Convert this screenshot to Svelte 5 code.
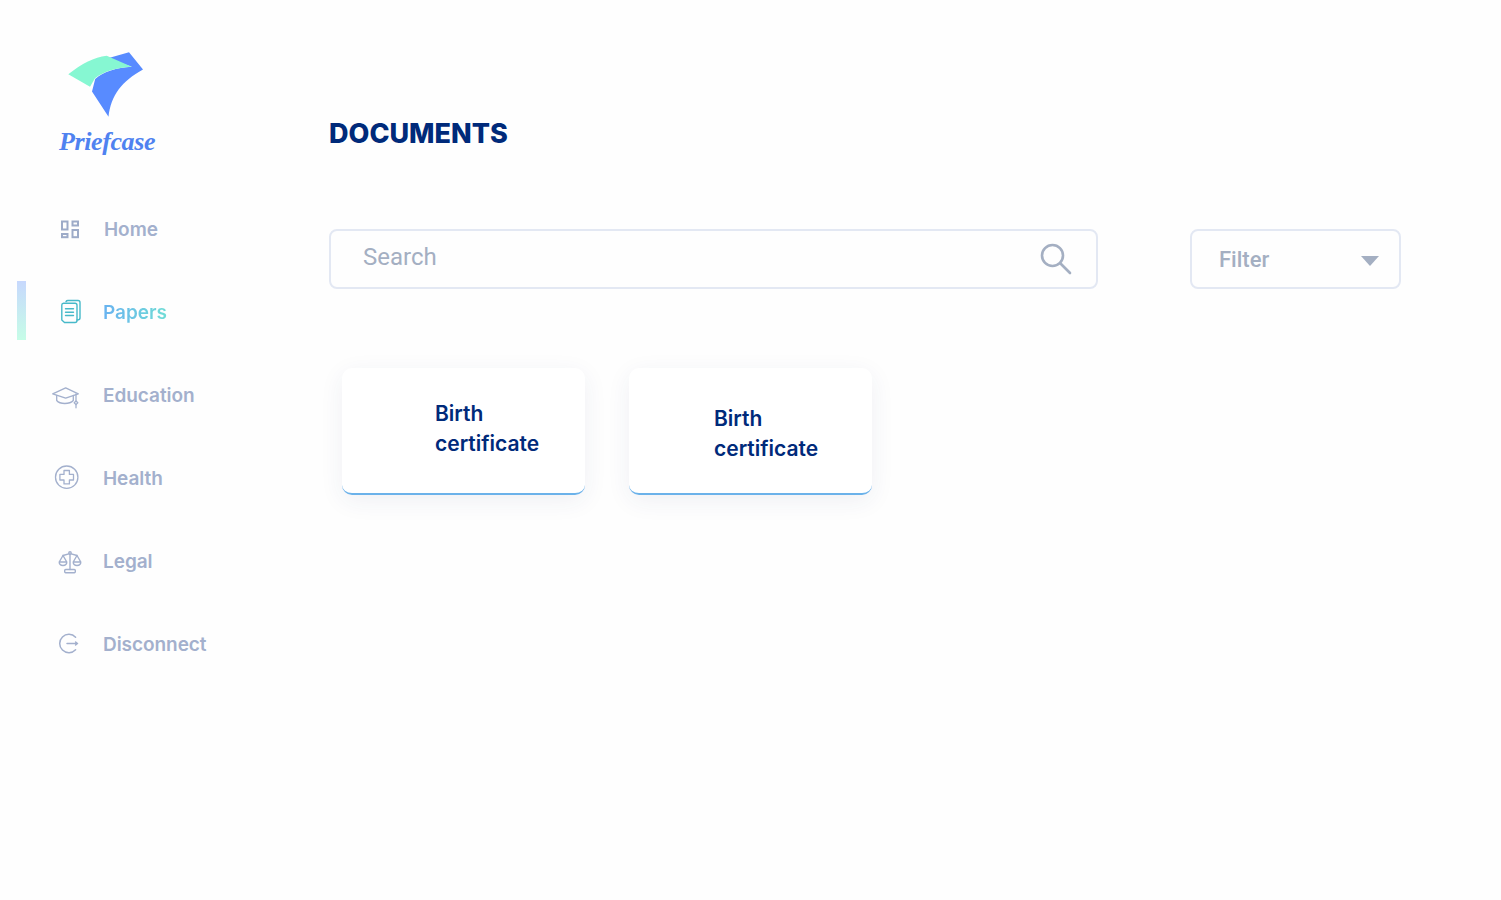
<script>
  const navItems = [
    { id: 'home', label: 'Home' },
    { id: 'papers', label: 'Papers', active: true },
    { id: 'education', label: 'Education' },
    { id: 'health', label: 'Health' },
    { id: 'legal', label: 'Legal' },
    { id: 'disconnect', label: 'Disconnect' }
  ];
</script>

<div class="page">
  <aside class="sidebar">
    <div class="brand">
      <svg class="logo" width="80" height="70" viewBox="0 0 80 70">
        <path d="M47 8.5 L69 2.3 L83 19.5 C62 31 51 45 48.5 66.8 L32 41.5 L35.2 29 C44 21 56 18 72 16.7 Z" fill="#588bff" />
        <path d="M8.3 24.3 C22 13 34 7.5 46.7 5.7 L71.7 16.7 C56 18 44 21 35 28.3 L30 36.7 Z" fill="#86f7d2" />
      </svg>
      <span class="wordmark">Priefcase</span>
    </div>

    <nav class="nav">
      {#each navItems as item}
        <a class="nav-item {item.id === 'home' ? 'home' : ''}" class:active={item.active} href="#{item.id}">
          <span class="nav-icon">
            {#if item.id === 'home'}
              <svg width="30" height="30" viewBox="0 0 30 30" fill="none" stroke="#9dabc8" stroke-width="2">
                <rect x="11" y="6.5" width="5.5" height="8" />
                <rect x="21.5" y="6.5" width="5.5" height="4" />
                <rect x="11" y="19" width="5.5" height="3.2" />
                <rect x="21.5" y="15" width="5.5" height="7.2" />
              </svg>
            {:else if item.id === 'papers'}
              <svg width="30" height="30" viewBox="0 0 30 30" fill="none" stroke="#47b9c9" stroke-width="1.4" stroke-linecap="round" stroke-linejoin="round">
                <path d="M15 3.6 C15.4 2.8 16 2.5 17 2.5 H27 C28.5 2.5 29 3.2 29 4.5 V20 C29 21.5 28.3 22 26 22" />
                <path d="M12.5 5.2 H24 C25.3 5.2 26 5.9 26 7.2 V22.5 C26 23.8 25.3 24.5 24 24.5 H13.5 L10.8 22 V7 C10.8 5.9 11.4 5.2 12.5 5.2 Z" />
                <path d="M14.5 10.8 H22.5 M14.5 14.2 H22.5 M14.5 17.5 H22.5" />
              </svg>
            {:else if item.id === 'education'}
              <svg width="30" height="30" viewBox="0 0 30 30" fill="none" stroke="#a3b0cd" stroke-width="1.3" stroke-linecap="round" stroke-linejoin="round">
                <path d="M1.7 12.8 L14.7 6.8 L27.3 12.8 L14.7 17.2 Z" />
                <path d="M5.7 14.5 V19.5 C9 23.5 18.5 23.5 22.3 19.5 V14.5" />
                <path d="M25 13 V20" />
                <path d="M25 20 L26.8 21.8 L25 23.6 L23.2 21.8 Z" />
                <path d="M25 23.6 V26.8" />
              </svg>
            {:else if item.id === 'health'}
              <svg width="30" height="30" viewBox="0 0 30 30" fill="none" stroke="#a3b0cd" stroke-width="1.3" stroke-linejoin="round">
                <circle cx="15.7" cy="13.2" r="11.2" />
                <path d="M13 6.5 H18.4 V10.4 H22.5 V16 H18.4 V19.9 H13 V16 H8.9 V10.4 H13 Z" />
              </svg>
            {:else if item.id === 'legal'}
              <svg width="30" height="30" viewBox="0 0 30 30" fill="none" stroke="#a3b0cd" stroke-width="1.4" stroke-linecap="round" stroke-linejoin="round">
                <circle cx="19" cy="6" r="1.2" />
                <path d="M19 7.4 V22.5 M12 8.5 L17.8 6.8 M20.2 6.8 L26 8.5" />
                <path d="M12 8.5 L8.2 15 M12 8.5 L15.8 15 M8.2 15 H15.8 C15.8 19.6 8.2 19.6 8.2 15 Z" />
                <path d="M26 8.5 L22.2 15 M26 8.5 L29.8 15 M22.2 15 H29.8 C29.8 19.6 22.2 19.6 22.2 15 Z" />
                <rect x="13.7" y="22.5" width="10.6" height="3.3" rx="1" />
              </svg>
            {:else}
              <svg width="30" height="30" viewBox="0 0 30 30" fill="none" stroke="#a3b0cd" stroke-width="1.5" stroke-linecap="round" stroke-linejoin="round">
                <path d="M24.6 7.2 A9.2 9.2 0 1 0 24.6 19.8" />
                <path d="M16 13.5 H26.5 M24.6 12 L26.5 13.5 L24.6 15" />
              </svg>
            {/if}
          </span>
          <span class="nav-label">{item.label}</span>
        </a>
      {/each}
    </nav>
  </aside>

  <main class="content">
    <h1>DOCUMENTS</h1>

    <div class="toolbar">
      <div class="search">
        <span>Search</span>
        <svg width="32" height="32" viewBox="0 0 32 32" fill="none" stroke="#a4afc2" stroke-width="2.6" stroke-linecap="round">
          <circle cx="12.5" cy="12.5" r="10.5" />
          <path d="M20.5 20.5 L30 30" />
        </svg>
      </div>
      <div class="filter">
        <span>Filter</span>
        <i class="caret"></i>
      </div>
    </div>

    <div class="cards">
      <div class="card first">Birth<br />certificate</div>
      <div class="card second">Birth<br />certificate</div>
    </div>
  </main>
</div>

<style>
  :global(body) {
    margin: 0;
    background: #fefefe;
  }

  .page {
    display: flex;
    height: 900px;
    font-family: Inter, "Liberation Sans", sans-serif;
  }

  .sidebar {
    width: 329px;
    flex-shrink: 0;
    box-sizing: border-box;
    padding: 50px 0 0 51px;
  }

  .brand {
    display: flex;
    flex-direction: column;
    height: 150px;
  }

  .logo {
    margin-left: 9px;
    overflow: visible;
  }

  .wordmark {
    font-family: "Liberation Serif", serif;
    font-style: italic;
    font-weight: 700;
    font-size: 26px;
    line-height: 30px;
    letter-spacing: -0.4px;
    color: #4f82f0;
    margin: 7px 0 0 8px;
  }

  .nav {
    display: flex;
    flex-direction: column;
    gap: 24px;
  }

  .nav-item {
    position: relative;
    display: flex;
    align-items: center;
    gap: 22px;
    height: 59px;
    text-decoration: none;
    color: #a3b0cd;
    font-size: 19px;
    letter-spacing: -0.05px;
    font-weight: 600;
  }

  .nav-item.home {
    gap: 23px;
  }

  .nav-icon {
    display: flex;
    width: 30px;
    height: 30px;
    flex-shrink: 0;
  }

  .nav-icon svg {
    overflow: visible;
  }

  .active .nav-label {
    background: linear-gradient(90deg, #68b2f0, #70dcd6);
    -webkit-background-clip: text;
    background-clip: text;
    color: transparent;
  }

  .active::before {
    content: "";
    position: absolute;
    left: -34px;
    top: -2px;
    width: 9px;
    height: 59px;
    background: linear-gradient(180deg, #c7d8fd, #c6fde7);
  }

  .content {
    flex: 1;
    min-width: 0;
    display: flex;
    flex-direction: column;
  }

  h1 {
    margin: 115px 0 0;
    font-size: 27px;
    line-height: 38px;
    font-weight: 800;
    color: #002a7a;
  }

  .toolbar {
    display: flex;
    gap: 92px;
    margin-top: 76px;
  }

  .search,
  .filter {
    box-sizing: border-box;
    height: 60px;
    display: flex;
    align-items: center;
    justify-content: space-between;
    border: 2px solid #e3e8f3;
    border-radius: 8px;
    font-family: Roboto, sans-serif;
    color: #a4afc2;
  }

  .search {
    width: 769px;
    padding: 0 24px 0 32px;
    font-size: 24px;
  }

  .search span {
    margin-top: -4px;
  }

  .filter {
    width: 211px;
    padding: 0 20px 0 27px;
    font-size: 22px;
    font-weight: 500;
  }

  .caret {
    width: 0;
    height: 0;
    border-left: 9px solid transparent;
    border-right: 9px solid transparent;
    border-top: 10px solid #a4afc2;
    margin-top: 3px;
  }

  .cards {
    display: flex;
    gap: 44px;
    margin: 79px 0 0 13px;
  }

  .card {
    box-sizing: border-box;
    width: 243px;
    height: 127px;
    background: #fff;
    border-bottom: 2px solid #6bb2ea;
    border-radius: 10px;
    box-shadow: 0 6px 24px rgba(40, 60, 110, 0.07);
    font-size: 21px;
    line-height: 30px;
    font-weight: 600;
    color: #002a7a;
  }

  .first {
    padding: 31px 0 0 93px;
  }

  .second {
    padding: 36px 0 0 85px;
  }
</style>
